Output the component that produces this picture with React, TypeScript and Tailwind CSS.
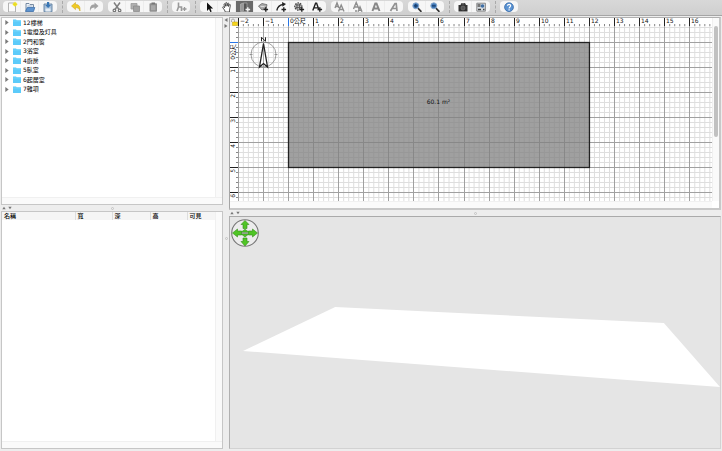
import React, { useLayoutEffect, useRef, useState } from 'react';

type Shape = { label: string; icon: React.ReactNode; active?: boolean; disabled?: boolean };

const Icon = ({ children }: { children: React.ReactNode }) => (
  <svg viewBox="0 0 12 12" className="block size-3" aria-hidden="true">
    {children}
  </svg>
);

const Plus = ({ color = '#222' }: { color?: string }) => <path d="M8.8 6.2v4.6M6.5 8.5h4.6" stroke={color} strokeWidth="1.4" />;

const Magnifier = ({ minus }: { minus?: boolean }) => (
  <Icon>
    <path d="M6.8 7l3.6 3.8" stroke="#333" strokeWidth="1.8" />
    <circle cx="4.8" cy="4.8" r="3" fill="#3f78b8" stroke="#88a8cc" strokeWidth="1" />
    <path d={minus ? 'M3 4.8h3.6' : 'M3 4.8h3.6M4.8 3v3.6'} stroke="#173a68" strokeWidth="1.2" />
  </Icon>
);

const groups: (Shape[] | null)[] = [
  [
    {
      label: 'New',
      icon: (
        <Icon>
          <path d="M2.5 2h5.5l1.5 2v7h-7z" fill="#fbfbfb" stroke="#aaa" strokeWidth=".9" />
          <circle cx="9" cy="3.2" r="2" fill="#f3e830" />
          <path d="M9 .8v4.8M6.6 3.2h4.8" stroke="#e5d51c" strokeWidth=".7" />
        </Icon>
      ),
    },
    {
      label: 'Open',
      icon: (
        <Icon>
          <path d="M2 10V2.5h3l1 1h3.5V6" fill="#eef3f8" stroke="#6a7f99" strokeWidth=".9" />
          <path d="M3.5 5h5" stroke="#8fa6c0" strokeWidth=".8" />
          <path d="M1.5 10.5l1.8-4h7.5L9.5 10.5z" fill="#5d93cf" stroke="#3d6ea8" strokeWidth=".8" />
        </Icon>
      ),
    },
    {
      label: 'Save',
      icon: (
        <Icon>
          <path d="M2 3h8v7.8H2z" fill="#a9c1da" stroke="#60809f" strokeWidth=".9" />
          <path d="M3.5 7.5h5v3h-5z" fill="#e5edf5" />
          <path d="M5 1h2.2v3H9L6.1 7 3.2 4H5z" fill="#3976b5" />
        </Icon>
      ),
    },
  ],
  null,
  [
    {
      label: 'Undo',
      icon: <Icon><path d="M1.5 5l4-3.5v2c3.3 0 5 1.8 4.5 6.5C9 7.4 7.8 6.6 5.5 6.6v2z" fill="#f0ca22" stroke="#c9a314" strokeWidth=".5" /></Icon>,
    },
    {
      label: 'Redo',
      disabled: true,
      icon: <Icon><path d="M10.5 5l-4-3.5v2C3.2 3.5 1.5 5.3 2 10c1-2.6 2.2-3.4 4.5-3.4v2z" fill="#a2a2a2" /></Icon>,
    },
  ],
  [
    {
      label: 'Cut',
      disabled: true,
      icon: (
        <Icon>
          <path d="M3 1.5l5 7M9 1.5l-5 7" stroke="#808080" strokeWidth="1.5" />
          <circle cx="3.4" cy="9.4" r="1.3" fill="none" stroke="#777" strokeWidth="1.2" />
          <circle cx="8.6" cy="9.4" r="1.3" fill="none" stroke="#777" strokeWidth="1.2" />
        </Icon>
      ),
    },
    {
      label: 'Copy',
      disabled: true,
      icon: <Icon><path d="M2 2.5h6V8H2z" fill="#b0b0b0" stroke="#999" strokeWidth=".8" /><path d="M4.5 5h6v5.500h-6z" fill="#a2a2a2" stroke="#8c8c8c" strokeWidth=".8" /></Icon>,
    },
    {
      label: 'Paste',
      disabled: true,
      icon: <Icon><rect x="2.5" y="2.2" width="7.5" height="8.6" rx=".8" fill="#8e8e8e" /><path d="M4.5 1.4H8v1.800H4.500z" fill="#777" /><path d="M4 4.3h4.500v5H4z" fill="#a9a9a9" /></Icon>,
    },
  ],
  null,
  [
    {
      label: 'Add furniture',
      disabled: true,
      icon: <Icon><path d="M3.500 1.500v4.500h3v4M3.500 6l-1.500 4" stroke="#999" strokeWidth="1.600" fill="none" /><path d="M9.500 6v4M7.500 8h4" stroke="#999" strokeWidth="1.300" /></Icon>,
    },
  ],
  null,
  [
    {
      label: 'Select',
      icon: <Icon><path d="M4 1.5V10l2-1.900 1.300 3 1.400-.6L7.400 7.600h2.700z" fill="#111" /></Icon>,
    },
    {
      label: 'Pan',
      icon: <Icon><path d="M3.500 9L1.700 6.600c-.4-.8.6-1.200 1.100-.6l.8.8L3 3.500c-.2-.9.8-1.100 1.100-.2l.6 2V2.200c0-1 1.100-1 1.200 0l.2 2.900.5-2.500c.2-.9 1.200-.7 1.100.2l-.2 2.700.8-1.700c.4-.8 1.300-.3 1.100.5L8.500 9v2H4.300z" fill="#fff" stroke="#333" strokeWidth=".8" /></Icon>,
    },
    {
      label: 'Create walls',
      active: true,
      icon: <Icon><path d="M1.500 3l3-1v8.500h-3z" fill="#999" stroke="#bbb" strokeWidth=".6" /><path d="M4.500 2H8v8.500H4.500z" fill="#555" stroke="#aaa" strokeWidth=".7" /><Plus color="#f2f2f2" /></Icon>,
    },
    {
      label: 'Create rooms',
      icon: <Icon><path d="M1.500 5L5 2.500l5 1.200-.7 3.100L5 9z" fill="#aaa" stroke="#666" strokeWidth=".8" /><path d="M3.500 5.500h4" stroke="#e7e7e7" strokeWidth=".8" /><Plus /></Icon>,
    },
    {
      label: 'Create polylines',
      icon: <Icon><path d="M1.800 9.500C2.500 6 4 4 8 3.500" fill="none" stroke="#222" strokeWidth="1.300" /><path d="M7 1l4 2-3.500 2.700z" fill="#222" /><Plus /></Icon>,
    },
    {
      label: 'Create dimensions',
      icon: <Icon><circle cx="5.300" cy="5.500" r="3.600" fill="#bbb" stroke="#444" strokeWidth="1.100" strokeDasharray="1.600 1" /><path d="M3 4h5M2.500 6.500H8M4 3v5M6.500 3v5" stroke="#555" strokeWidth=".9" /><Plus /></Icon>,
    },
    {
      label: 'Add text',
      icon: <Icon><path d="M1.800 9.500l2.800-7.300h1L8 9M2.900 6.900h4" fill="none" stroke="#222" strokeWidth="1.400" /><Plus /></Icon>,
    },
  ],
  [
    {
      label: 'Increase text size',
      disabled: true,
      icon: <Icon><path d="M1 7l2-5 2 5M1.800 5.500h2.600M4.500 10.500L7.200 4 10 10.500M5.500 8.500h3.600" fill="none" stroke="#8e8e8e" strokeWidth="1.400" /></Icon>,
    },
    {
      label: 'Decrease text size',
      disabled: true,
      icon: <Icon><path d="M1.500 8l2.700-6.500L7 8M2.500 6h3.600M6 10.800l2-5 2 5M7 9.300h2.300M3 10h2" fill="none" stroke="#8e8e8e" strokeWidth="1.400" /></Icon>,
    },
    {
      label: 'Bold',
      disabled: true,
      icon: <Icon><path d="M2.500 10l2.800-7.500h1.200L9.500 10M3.800 7.500H8.200" fill="none" stroke="#888" strokeWidth="2" /></Icon>,
    },
    {
      label: 'Italic',
      disabled: true,
      icon: <Icon><path d="M2.500 10L7 2.500h1.200L9 10M4.500 7.500h4" fill="none" stroke="#929292" strokeWidth="1.700" /></Icon>,
    },
  ],
  [
    { label: 'Zoom in', icon: <Magnifier /> },
    { label: 'Zoom out', icon: <Magnifier minus /> },
  ],
  null,
  [
    {
      label: 'Create photo',
      icon: <Icon><path d="M1.500 4h2l1-2H8l1 2h1.500v6.500h-9z" fill="#333" /><circle cx="6" cy="7" r="2" fill="#555" stroke="#777" strokeWidth=".7" /><path d="M4.800 2.800h2.500" stroke="#999" strokeWidth=".8" /></Icon>,
    },
    {
      label: 'Preferences',
      icon: <Icon><path d="M1.800 2.200h8.600v8H1.800z" fill="#d5dbe0" stroke="#808080" strokeWidth=".9" /><path d="M2.500 3h3v3h-3z" fill="#777" /><circle cx="7.500" cy="5" r="1.800" fill="#3f6fa5" /><path d="M3 8.500h3M8 8.500h1.500" stroke="#444" strokeWidth="1.400" /></Icon>,
    },
  ],
  null,
  [
    {
      label: 'Help',
      icon: <Icon><circle cx="6" cy="6.200" r="4.400" fill="#5b93d2" stroke="#3469aa" strokeWidth=".8" /><path d="M4.500 4.800c0-2 3.200-1.800 3.100 0C7.600 6 6.100 6 6.100 7.400M6.100 8.300v1.200" fill="none" stroke="#fff" strokeWidth="1.200" /></Icon>,
    },
  ],
];

const Toolbar = () => (
  <header className="flex h-4 shrink-0 gap-[5px] overflow-hidden border-b border-[#a5a5a5] bg-linear-to-b from-[#d8d8d8] to-[#cfcfcf] pt-px pl-[3px]">
    {groups.map((group, i) =>
      group ? (
        <div key={i} className="flex h-[11px] shrink-0 overflow-hidden rounded-sm bg-[#f6f6f6]">
          {group.map((item) => (
            <button
              key={item.label}
              type="button"
              aria-label={item.label}
              disabled={item.disabled}
              className={`flex w-[18px] items-center justify-center border-r border-[#ececec] last:border-r-0 ${item.active ? 'bg-[#696969]' : ''}`}
            >
              {item.icon}
            </button>
          ))}
        </div>
      ) : (
        <div key={i} className="-mr-px h-3 w-px shrink-0 border-l border-dashed border-[#aaa]" />
      ),
    )}
  </header>
);

const folders = ['12樓梯', '1電燈及灯具', '2門和窗', '3浴室', '4廚房', '5臥室', '6起居室', '7雜項'];

const Catalog = () => (
  <section className="flex h-[188px] shrink-0 flex-col border border-[#c6c6c6] bg-white">
    <div className="flex min-h-0 flex-1">
      <ul className="flex h-[76px] flex-1 flex-col">
        {folders.map((name) => (
          <li key={name} className="flex flex-1">
            <button type="button" className="flex flex-1 items-center text-left leading-none">
              <svg viewBox="0 0 4 6" className="ml-[3px] h-[5px] w-1" aria-hidden="true">
                <path d="M0 0l4 3-4 3z" fill="#7a7a7a" />
              </svg>
              <svg viewBox="0 0 8 7" className="mr-0.5 ml-1 h-[7px] w-2" aria-hidden="true">
                <path d="M0 .5h3l.7.8H8V7H0z" fill="#5ccbfa" />
                <path d="M0 2h8" stroke="#8adcff" strokeWidth=".5" />
              </svg>
              {name}
            </button>
          </li>
        ))}
      </ul>
      <div className="w-[7px] border-l border-[#f0f0f0] bg-[#fafafa]" />
    </div>
    <div className="h-[7px] border-t border-[#f0f0f0] bg-[#fafafa]" />
  </section>
);

const HorizontalSplitter = () => (
  <div className="flex h-1.5 shrink-0 items-center">
    <svg viewBox="0 0 10 4" className="ml-px h-1 w-2.5" aria-hidden="true">
      <path d="M.3 3.200L2 .8l1.700 2.400zM6.300 .8h3.400L8 3.200z" fill="#777" />
    </svg>
    <div className="flex flex-1 justify-center pr-2.5">
      <div className="size-[3px] rounded-full border border-[#c3c3c3]" />
    </div>
  </div>
);

const FurnitureList = () => (
  <section className="flex min-h-0 flex-1 flex-col border border-[#c6c6c6] bg-white">
    <div className="flex min-h-0 flex-1">
      <div className="flex-1">
        <table className="w-full table-fixed leading-none">
          <thead>
            <tr className="h-2 bg-[#f5f5f5] text-left">
              <th className="w-[73px] p-0 pl-0.5 font-medium">名稱</th>
              <th className="w-[37px] border-l border-[#ddd] p-0 pl-0.5 font-medium">寬</th>
              <th className="w-[38px] border-l border-[#ddd] p-0 pl-0.5 font-medium">深</th>
              <th className="w-[37px] border-l border-[#ddd] p-0 pl-0.5 font-medium">高</th>
              <th className="border-l border-[#ddd] p-0 pl-0.5 font-medium">可見</th>
            </tr>
          </thead>
          <tbody />
        </table>
      </div>
      <div className="w-[7px] border-l border-[#f0f0f0] bg-[#fafafa]" />
    </div>
    <div className="h-[7px] border-t border-[#f0f0f0] bg-[#fafafa]" />
  </section>
);

const METER_X = 25.08;
const METER_Y = 25;
const ZERO_X = 58.5;
const ZERO_Y = 24.5;
const lines = Array.from({ length: 38 }, (_, i) => i - 3);
const px = (n: number) => Math.floor(ZERO_X + n * METER_X) + 0.5;

const Plan = () => {
  const ref = useRef<SVGSVGElement>(null);
  const [width, setWidth] = useState(0);

  useLayoutEffect(() => {
    const measure = () => setWidth(ref.current ? ref.current.getBoundingClientRect().width : 0);
    measure();
    window.addEventListener('resize', measure);
    return () => window.removeEventListener('resize', measure);
  }, []);

  // The grid and the ruler run to the right edge of the visible plan, five columns per metre.
  const count = Math.max(0, Math.floor(((width - ZERO_X) / METER_X) * 5)) + 11;
  const columns = Array.from({ length: count }, (_, i) => i - 10);

  return (
    <svg ref={ref} className="block h-full w-full text-[6px]" role="img" aria-label="Plan">
      <rect width="100%" height="100%" fill="#fff" />
      {columns.filter((n) => n % 5).map((n) => (
        <path key={n} d={`M${ZERO_X + (n * METER_X) / 5} 8V400`} stroke="#dedede" />
      ))}
      {lines.filter((n) => n % 5).map((n) => (
        <path key={n} d={`M8 ${ZERO_Y + n * 5}H${width}`} stroke="#dedede" />
      ))}
      {columns.filter((n) => n % 5 === 0).map((n) => (
        <path key={n} d={`M${px(n / 5)} 8V400`} stroke="#a0a0a0" />
      ))}
      {lines.filter((n) => n % 5 === 0).map((n) => (
        <path key={n} d={`M8 ${ZERO_Y + n * 5}H${width}`} stroke="#a0a0a0" />
      ))}
      <rect x={ZERO_X} y={ZERO_Y} width={12 * METER_X} height={5 * METER_Y} fill="#808080" fillOpacity=".75" stroke="#222" strokeWidth="1.300" />
      <text x="208.500" y="86" textAnchor="middle" fill="#111">60.1 m²</text>
      <g fill="none" stroke="#222">
        <circle cx="33.500" cy="36.500" r="12.500" stroke="#777" strokeWidth=".7" />
        <path d="M19.500 36.500h3M44.500 36.500h3" stroke="#777" strokeWidth=".7" />
        <path d="M33.500 25.500l-4 23.500 4-3.500 4 3.500z" fill="#fff" strokeWidth="1.300" />
        <path d="M33.500 25v20" strokeWidth=".4" />
        <path d="M31.500 23.300v-4l4 4v-4" strokeWidth="1" />
      </g>
      <rect width="100%" height="8" fill="#fff" />
      <rect width="8" height="100%" fill="#fff" />
      {columns.map((n) => (
        <path key={n} d={n % 5 ? `M${ZERO_X + (n * METER_X) / 5} 6V8` : `M${px(n / 5)} 0V8`} stroke={n === 0 ? '#2876e8' : n % 5 ? '#888' : '#222'} />
      ))}
      {lines.map((n) => (
        <path key={n} d={`M${n % 5 ? 6 : 0} ${ZERO_Y + n * 5}H8`} stroke={n === 0 ? '#2876e8' : n % 5 ? '#888' : '#222'} />
      ))}
      {columns.filter((n) => n % 5 === 0 && px(n / 5) + 12 < width).map((n) => (
        <text key={n} x={px(n / 5) + 1.5} y="5" fill="#111">
          {n === 0 ? '0公尺' : String(n / 5).replace('-', '−')}
        </text>
      ))}
      {lines.filter((n) => n % 5 === 0).map((n) => (
        <text key={n} textAnchor="end" transform={`translate(5 ${ZERO_Y + n * 5 + 1.5}) rotate(-90)`} fill="#111">
          {n === 0 ? '0公尺' : n / 5}
        </text>
      ))}
      <path d="M0 0h8v8H0z" fill="#eee" />
      <path d="M1.500 4V2.500a1.500 1.500 0 013 0V4" fill="none" stroke="#aaa" />
      <path d="M2.500 4h5v3.500h-5z" fill="#f5d51d" stroke="#c7a70f" strokeWidth=".5" />
    </svg>
  );
};

const PlanView = () => (
  <section className="flex h-[193px] shrink-0 flex-col border border-r-2 border-b-2 border-[#c8c8c8] border-t-[#b0b0b0] border-l-[#a5a5a5] bg-white">
    <div className="flex min-h-0 flex-1">
      <div className="min-w-0 flex-1 overflow-hidden">
        <Plan />
      </div>
      <div className="w-[7px] border-l border-[#f0f0f0] bg-[#fafafa] pt-2">
        <div className="mx-px h-[111px] rounded-full bg-[#c1c1c1]" />
      </div>
    </div>
    <div className="mr-[7px] h-[7px] border-t border-[#f0f0f0] bg-[#fafafa]" />
  </section>
);

const View3D = () => (
  <section className="relative min-h-0 flex-1 border border-[#d2d2d2] border-t-[#aaa] border-l-[#b0b0b0] bg-[#e5e5e5]">
    <svg viewBox="0 0 489 231" preserveAspectRatio="none" className="block h-full w-full" role="img" aria-label="3D view">
      <path d="M105 90L433 106 489 170 13 134z" fill="#fff" />
    </svg>
    <button type="button" aria-label="Navigate" className="absolute top-0.5 left-px size-7">
      <svg viewBox="0 0 28 28" className="block size-7" aria-hidden="true">
        <circle cx="14" cy="14" r="13.300" fill="#ececec" stroke="#777" strokeWidth="1.100" />
        <g fill="#4fc525" stroke="#348e19" strokeWidth=".6">
          <path d="M14 1.500l4 4h-2v4h-4v-4h-2z" />
          <path d="M14 27l4-4.500h-2V19h-4v3.500h-2z" />
          <path d="M1.500 14l5-4v2h4v4h-4v2z" />
          <path d="M26.500 14l-5-4v2h-4v4h4v2z" />
          <path d="M14 10.200l3.800 3h-7.600zM14 18l3.800-3h-7.600z" />
        </g>
        <path d="M11 14.100h6" stroke="#777" strokeWidth=".9" />
      </svg>
    </button>
  </section>
);

export default function App() {
  return (
    <div className="flex h-screen flex-col bg-[#ededed] font-['DejaVu_Sans','Noto_Sans_CJK_TC',sans-serif] text-[6px] text-black">
      <Toolbar />
      <main className="flex min-h-0 flex-1 pt-px pr-px pb-0.5 pl-px">
        <div className="flex w-[222px] shrink-0 flex-col">
          <Catalog />
          <HorizontalSplitter />
          <FurnitureList />
        </div>
        <div className="flex w-1.5 shrink-0 flex-col items-center">
          <svg viewBox="0 0 4 10" className="mt-px h-2.5 w-1" aria-hidden="true">
            <path d="M3.500 0v4L.5 2zM.5 6v4l3-2z" fill="#777" />
          </svg>
          <div className="flex flex-1 items-center">
            <div className="size-[3px] rounded-full border border-[#c3c3c3]" />
          </div>
        </div>
        <div className="flex min-w-0 flex-1 flex-col">
          <PlanView />
          <HorizontalSplitter />
          <View3D />
        </div>
      </main>
    </div>
  );
}
